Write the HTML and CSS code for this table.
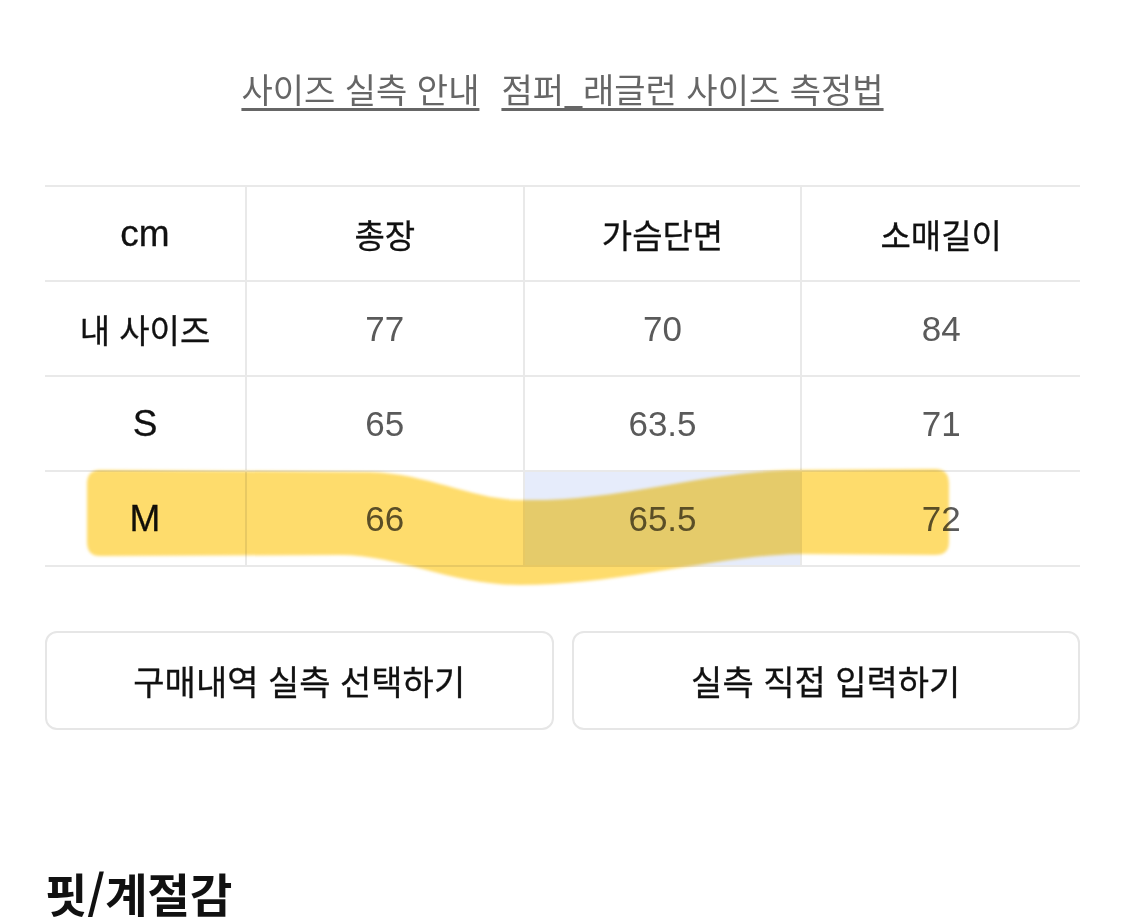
FILE: index.html
```html
<!DOCTYPE html>
<html lang="ko">
<head>
<meta charset="utf-8">
<title>사이즈</title>
<link rel="stylesheet" href="styles.css">
</head>
<body>
<main class="page">
  <nav class="guide">
    <a class="guide-link" href="#">사이즈 실측 안내</a>
    <a class="guide-link" href="#">점퍼_래글런 사이즈 측정법</a>
  </nav>

  <section class="size-table">
    <div class="cell head latin">cm</div>
    <div class="cell head">총장</div>
    <div class="cell head">가슴단면</div>
    <div class="cell head">소매길이</div>

    <div class="cell label">내 사이즈</div>
    <div class="cell val">77</div>
    <div class="cell val">70</div>
    <div class="cell val">84</div>

    <div class="cell label latin">S</div>
    <div class="cell val">65</div>
    <div class="cell val">63.5</div>
    <div class="cell val">71</div>

    <div class="cell label latin">M</div>
    <div class="cell val">66</div>
    <div class="cell val selected">65.5</div>
    <div class="cell val">72</div>

    <svg class="marker" viewBox="45 183 1035 420" width="1035" height="420" aria-hidden="true">
      <defs>
        <filter id="soft" x="-5%" y="-20%" width="110%" height="140%">
          <feGaussianBlur stdDeviation="1.8"/>
        </filter>
      </defs>
      <path filter="url(#soft)" fill="#FEDC6C" d="M100 468 L370 470 C430 472 470 497 520 498 C620 500 700 470 790 468 L935 467 Q949 467 949 482 L949 540 Q949 553 935 553 L800 552 C720 553 620 583 520 583 C450 583 400 553 340 553 L100 554 Q87 554 87 540 L87 482 Q87 468 100 468 Z"/>
    </svg>
  </section>

  <div class="actions">
    <button class="action-btn" type="button">구매내역 실측 선택하기</button>
    <button class="action-btn" type="button">실측 직접 입력하기</button>
  </div>

  <h2 class="section-title">핏/계절감</h2>
</main>
</body>
</html>
```

FILE: styles.css
```css
* {
  box-sizing: border-box;
}

html, body {
  margin: 0;
  background: #ffffff;
}

body {
  font-family: "Liberation Sans", "Noto Sans CJK KR", sans-serif;
  color: #111111;
}

.page {
  padding: 0 45px;
}

.guide {
  display: flex;
  justify-content: center;
  gap: 22px;
  padding-top: 69px;
  font-family: "Noto Sans CJK KR", sans-serif;
  font-size: 34px;
  font-weight: 400;
  line-height: 40px;
}

.guide-link {
  color: #666666;
  text-decoration: underline;
  text-decoration-thickness: 2.5px;
  text-underline-offset: 5px;
}

.size-table {
  position: relative;
  display: grid;
  grid-template-columns: 202px repeat(3, 1fr);
  margin-top: 76px;
  border-top: 2px solid #e9e9e9;
}

.cell {
  height: 95px;
  display: flex;
  align-items: center;
  justify-content: center;
  border-bottom: 2px solid #e9e9e9;
  border-right: 2px solid #e9e9e9;
  font-size: 33px;
}

.cell:nth-child(4n) {
  border-right: none;
}

.head,
.label {
  color: #111111;
  -webkit-text-stroke: 0.3px #111111;
}

.latin {
  font-size: 37px;
  -webkit-text-stroke: 0.3px #111111;
}

.val {
  color: #5a5a5a;
  font-size: 35px;
  font-weight: 400;
}

.selected {
  background: #e6ecfb;
}

.marker {
  position: absolute;
  left: 0;
  top: -2px;
  pointer-events: none;
  mix-blend-mode: multiply;
}

.actions {
  display: flex;
  gap: 18px;
  margin-top: 64px;
}

.action-btn {
  flex: 1;
  height: 99px;
  border: 2px solid #e6e6e6;
  border-radius: 12px;
  background: #ffffff;
  font-family: "Noto Sans CJK KR", sans-serif;
  font-size: 34px;
  font-weight: 400;
  -webkit-text-stroke: 0.3px #111111;
  color: #111111;
  cursor: pointer;
}

.section-title {
  margin: 135px 0 0;
  font-family: "Noto Sans CJK KR", sans-serif;
  font-size: 46px;
  line-height: 54px;
  font-weight: 700;
  color: #111111;
}
```
